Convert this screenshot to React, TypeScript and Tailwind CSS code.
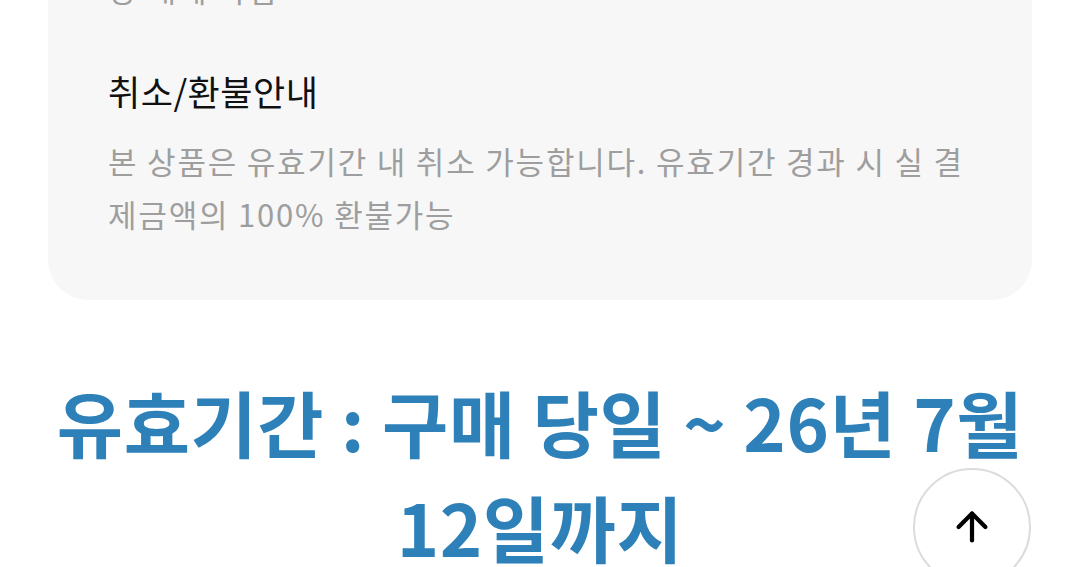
import { ArrowUp } from 'lucide-react';

const FONT = { fontFamily: '"Noto Sans CJK KR", "Noto Sans", sans-serif' };

export default function App() {
  return (
    <div className="relative h-[567px] w-[1080px] overflow-hidden bg-white" style={FONT}>
      <div className="mt-[-38px] mx-[48px] rounded-b-[40px] bg-[#f7f7f7] px-[60px] pb-[60px]">
        <p className="text-[31px] leading-[53px] tracking-[2px] text-[#9e9e9e]">양 매체 가입</p>
        <h3 className="mt-[51px] text-[35px] leading-[50px] tracking-[0.5px] text-[#111]">취소/환불안내</h3>
        <p className="mt-[18px] text-[31px] leading-[53px] tracking-[1.8px] text-[#9e9e9e] break-all">
          본 상품은 유효기간 내 취소 가능합니다. 유효기간 경과 시 실 결제금액의 100% 환불가능
        </p>
      </div>

      <h2 className="mt-[68px] px-[40px] text-center text-[72px] font-bold leading-[105px] tracking-[0.6px] text-[#2e80b9] break-keep">
        유효기간 : 구매 당일 ~ 26년 7월 12일까지
      </h2>

      <button className="absolute left-[913px] top-[468px] flex h-[118px] w-[118px] items-center justify-center rounded-full border-2 border-[#dcdcdc] bg-white">
        <ArrowUp className="h-[46px] w-[46px] text-black" strokeWidth={2.2} />
      </button>
    </div>
  );
}
